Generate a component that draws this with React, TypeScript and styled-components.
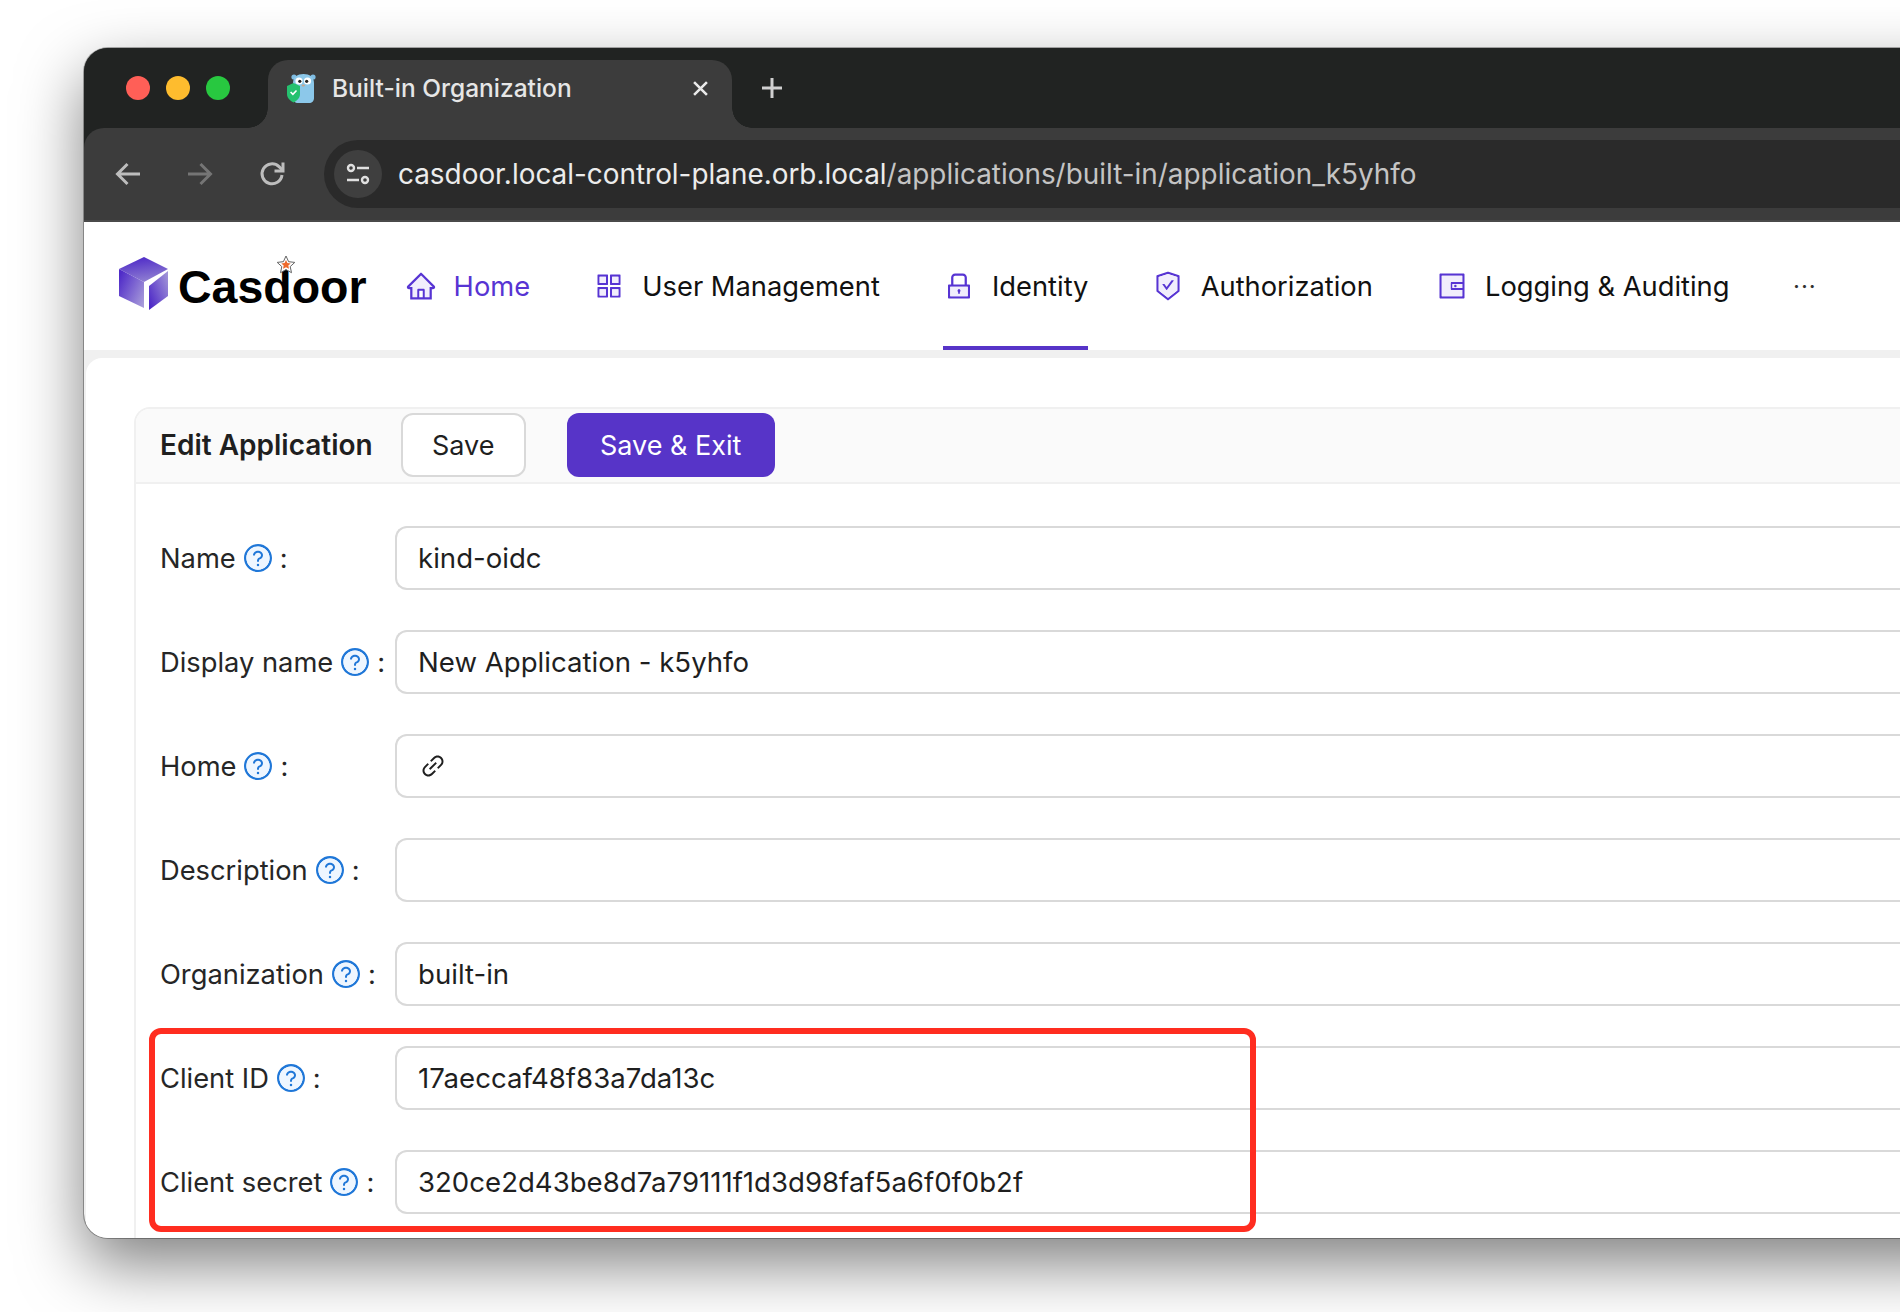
import { createGlobalStyle, styled } from 'styled-components';
import {
  AiOutlineLink,
  AiTwotoneAppstore,
  AiTwotoneHome,
  AiTwotoneLock,
  AiTwotoneQuestionCircle,
  AiTwotoneSafetyCertificate,
  AiTwotoneWallet,
} from 'react-icons/ai';

const NAV_ITEMS = [
  { label: 'Home', icon: AiTwotoneHome, accent: true },
  { label: 'User Management', icon: AiTwotoneAppstore },
  { label: 'Identity', icon: AiTwotoneLock, selected: true },
  { label: 'Authorization', icon: AiTwotoneSafetyCertificate },
  { label: 'Logging & Auditing', icon: AiTwotoneWallet },
];

const FIELDS = [
  { label: 'Name', value: 'kind-oidc' },
  { label: 'Display name', value: 'New Application - k5yhfo' },
  { label: 'Home', value: '', link: true },
  { label: 'Description', value: '' },
  { label: 'Organization', value: 'built-in' },
  { label: 'Client ID', value: '17aeccaf48f83a7da13c' },
  { label: 'Client secret', value: '320ce2d43be8d7a79111f1d3d98faf5a6f0f0b2f' },
];

const Gopher = () => (
  <svg width="29" height="31" viewBox="0 0 29 31">
    <circle cx="7" cy="4" r="2.600" fill="#7fbde3" />
    <circle cx="26" cy="4" r="2.600" fill="#7fbde3" />
    <path d="M6 10c0-6 4.500-9 10.500-9S27 4 27 10v15c0 3-2 5-5 5H11c-3 0-5-2-5-5z" fill="#8cc8ea" />
    <circle cx="12" cy="8" r="3.600" fill="#fff" />
    <circle cx="20.500" cy="8" r="3.600" fill="#fff" />
    <circle cx="12.800" cy="8.300" r="1.600" fill="#222" />
    <circle cx="19.700" cy="8.300" r="1.600" fill="#222" />
    <ellipse cx="16.300" cy="12.500" rx="1.700" ry="1.100" fill="#c9a58c" />
    <path d="M0 13l6.500-3 6.500 3v8c0 4-3 6.500-6.500 8.500C3 27.500 0 25 0 21z" fill="#25c16f" />
    <path d="M3.600 19l2.300 2.300 3.600-3.800" fill="none" stroke="#fff" strokeWidth="1.600" />
  </svg>
);

const CubeLogo = () => (
  <svg width="49" height="54" viewBox="0 0 49 54">
    <defs>
      <linearGradient id="cubeTop" x1="0.4" y1="0" x2="0.7" y2="1">
        <stop offset="0" stopColor="#4f2bc8" />
        <stop offset="1" stopColor="#9384d2" />
      </linearGradient>
      <linearGradient id="cubeLeft" x1="0" y1="0.2" x2="1" y2="0.9">
        <stop offset="0" stopColor="#4f2bc8" />
        <stop offset="1" stopColor="#a99dda" />
      </linearGradient>
      <linearGradient id="cubeRight" x1="1" y1="0.1" x2="0" y2="0.9">
        <stop offset="0" stopColor="#a295d8" />
        <stop offset="1" stopColor="#4a24c6" />
      </linearGradient>
    </defs>
    <path d="M25 0l24 12-24 13L0 12z" fill="url(#cubeTop)" />
    <path d="M0 12l25 13v26L0 39z" fill="url(#cubeLeft)" />
    <path d="M30 29L49 14v25L30 53z" fill="url(#cubeRight)" />
  </svg>
);

const Star = () => (
  <svg width="20" height="20" viewBox="0 0 20 20">
    <path
      d="M10 1l2.600 5.700 6.200.700-4.600 4.200 1.300 6.100L10 14.600 4.500 17.700l1.300-6.100L1.200 7.400l6.200-.700z"
      fill="#fff"
      stroke="#666"
      strokeWidth="1"
    />
    <path
      d="M10 5l1.400 3 3.300.400-2.400 2.200.700 3.200L10 12.200l-3 1.600.700-3.200-2.400-2.200 3.300-.400z"
      fill="#ee6a2c"
    />
  </svg>
);

const App = () => {
  return (
    <>
      <GlobalStyle />
      <Page>
        <Window>
          <TabStrip>
            <Lights>
              <Light $color="#ff5f57" />
              <Light $color="#febc2e" />
              <Light $color="#28c840" />
            </Lights>
            <Tab>
              <Gopher />
              <TabTitle>Built-in Organization</TabTitle>
              <svg width="15" height="15" viewBox="0 0 14 14">
                <path d="M1 1l12 12M13 1L1 13" stroke="#e8e8e8" strokeWidth="2.400" />
              </svg>
            </Tab>
            <NewTab>
              <svg width="22" height="22" viewBox="0 0 22 22">
                <path d="M11 1v20M1 11h20" stroke="#d0d0d0" strokeWidth="3" />
              </svg>
            </NewTab>
          </TabStrip>
          <Toolbar>
            <ToolIcon>
              <svg width="26" height="24" viewBox="0 0 26 24" fill="none" stroke="#bdbdbd" strokeWidth="3">
                <path d="M25 12H3M12.500 2L2.500 12l10 10" />
              </svg>
            </ToolIcon>
            <ToolIcon>
              <svg width="26" height="24" viewBox="0 0 26 24" fill="none" stroke="#757575" strokeWidth="3">
                <path d="M1 12h22M13.500 2l10 10-10 10" />
              </svg>
            </ToolIcon>
            <ToolIcon>
              <svg width="26" height="26" viewBox="0 0 26 26" fill="none" stroke="#bdbdbd" strokeWidth="3">
                <path d="M23 14a10 10 0 1 1-3-8.400L23.500 9" />
                <path d="M24 1.500V10H15.500" />
              </svg>
            </ToolIcon>
            <AddressBar>
              <SiteInfo>
                <svg width="24" height="24" viewBox="0 0 24 24" fill="none" stroke="#e0e0e0" strokeWidth="2.400">
                  <circle cx="5" cy="6" r="3" />
                  <path d="M11 6h12M1 18h12" />
                  <circle cx="19" cy="18" r="3" />
                </svg>
              </SiteInfo>
              <Url>
                casdoor.local-control-plane.orb.local
                <UrlPath>/applications/built-in/application_k5yhfo</UrlPath>
              </Url>
            </AddressBar>
          </Toolbar>
          <NavBar>
            <Logo>
              <CubeLogo />
              <LogoText>
                Casdoor
                <LogoStar>
                  <Star />
                </LogoStar>
              </LogoText>
            </Logo>
            {NAV_ITEMS.map(({ label, icon: Icon, accent, selected }) => (
              <NavItem key={label} $accent={accent} $selected={selected}>
                <NavIconSlot>
                  <Icon />
                </NavIconSlot>
                <span>{label}</span>
              </NavItem>
            ))}
            <MoreDots>···</MoreDots>
          </NavBar>
          <Content>
            <Sheet>
              <Card>
                <CardHeader>
                  <CardTitle>Edit Application</CardTitle>
                  <SaveButton>Save</SaveButton>
                  <PrimaryButton>Save &amp; Exit</PrimaryButton>
                </CardHeader>
                <CardBody>
                  {FIELDS.map((field) => (
                    <Row key={field.label}>
                      <FieldLabel>
                        <span>{field.label}</span>
                        <HelpIcon>
                          <AiTwotoneQuestionCircle />
                        </HelpIcon>
                        <span>:</span>
                      </FieldLabel>
                      <FieldInput>
                        {field.link && <AiOutlineLink />}
                        {field.value}
                      </FieldInput>
                    </Row>
                  ))}
                </CardBody>
              </Card>
            </Sheet>
          </Content>
          <Highlight />
        </Window>
      </Page>
    </>
  );
};

export default App;

const GlobalStyle = createGlobalStyle`
  html, body {
    margin: 0;
    height: 100%;
    overflow: hidden;
    background: #fff;
  }
  * {
    box-sizing: border-box;
  }
`;

const Page = styled.div`
  width: 1900px;
  height: 1312px;
  padding: 48px 0 0 84px;
  overflow: hidden;
  background: #fff;
  font-family: Inter, 'Liberation Sans', sans-serif;
`;

const Window = styled.div`
  position: relative;
  width: 1900px;
  height: 1190px;
  overflow: hidden;
  display: flex;
  flex-direction: column;
  border-radius: 24px;
  background: #212322;
  box-shadow: 0 0 0 1px rgba(0, 0, 0, 0.3), 0 26px 64px rgba(0, 0, 0, 0.5);
`;

const TabStrip = styled.div`
  height: 80px;
  flex: none;
  display: flex;
  align-items: flex-end;
  background: #212322;
`;

const Lights = styled.div`
  width: 184px;
  height: 80px;
  flex: none;
  display: flex;
  align-items: center;
  gap: 16px;
  padding-left: 42px;
`;

const Light = styled.span<{ $color: string }>`
  width: 24px;
  height: 24px;
  border-radius: 50%;
  background: ${(p) => p.$color};
`;

const Tab = styled.div`
  position: relative;
  width: 464px;
  height: 68px;
  flex: none;
  display: flex;
  align-items: center;
  padding: 0 24px 11px 19px;
  border-radius: 20px 20px 0 0;
  background: #3c3c3c;

  &::before,
  &::after {
    content: '';
    position: absolute;
    bottom: 0;
    width: 20px;
    height: 20px;
  }
  &::before {
    left: -20px;
    background: radial-gradient(circle at 0 0, #212322 19.5px, #3c3c3c 20px);
  }
  &::after {
    right: -20px;
    background: radial-gradient(circle at 100% 0, #212322 19.5px, #3c3c3c 20px);
  }
`;

const TabTitle = styled.span`
  flex: 1;
  margin: -2px 0 0 16px;
  font-size: 24.500px;
  font-weight: 500;
  color: #e6e6e6;
  white-space: nowrap;
`;

const NewTab = styled.div`
  height: 80px;
  display: flex;
  align-items: center;
  padding-left: 29px;
`;

const Toolbar = styled.div`
  height: 94px;
  flex: none;
  display: flex;
  align-items: center;
  gap: 46px;
  padding-left: 31px;
  border-top-left-radius: 20px;
  border-bottom: 2px solid #4a4a4a;
  background: #3c3c3c;
`;

const ToolIcon = styled.div`
  width: 26px;
  height: 26px;
  display: flex;
  align-items: center;
  justify-content: center;
`;

const AddressBar = styled.div`
  flex: 1;
  height: 68px;
  margin-left: -7px;
  display: flex;
  align-items: center;
  padding-left: 10px;
  border-radius: 34px 0 0 34px;
  background: #2a2a2a;
`;

const SiteInfo = styled.div`
  width: 48px;
  height: 48px;
  display: flex;
  align-items: center;
  justify-content: center;
  border-radius: 50%;
  background: #3f3f3f;
`;

const Url = styled.div`
  margin-left: 16px;
  font-size: 27.900px;
  color: #ececec;
  white-space: nowrap;
`;

const UrlPath = styled.span`
  color: #c4c4c4;
`;

const NavBar = styled.div`
  height: 128px;
  flex: none;
  display: flex;
  align-items: stretch;
  background: #fff;
`;

const Logo = styled.div`
  width: 289px;
  flex: none;
  display: flex;
  align-items: center;
  gap: 10px;
  padding: 0 0 5px 35px;
`;

const LogoText = styled.div`
  position: relative;
  margin-top: 7px;
  font-family: 'Liberation Sans', Arial, sans-serif;
  font-size: 46.500px;
  font-weight: 700;
  line-height: 1;
  color: #000;
`;

const LogoStar = styled.span`
  position: absolute;
  left: 98px;
  top: -9px;
  line-height: 0;
`;

const NavItem = styled.div<{ $accent?: boolean; $selected?: boolean }>`
  position: relative;
  flex: none;
  display: flex;
  align-items: center;
  margin: 0 31.600px;
  font-size: 27.300px;
  color: ${(p) => (p.$accent ? '#5734d3' : '#111')};

  ${(p) =>
    p.$selected &&
    `
    &::after {
      content: '';
      position: absolute;
      left: 0;
      right: 0;
      bottom: 0;
      height: 4px;
      background: #5734c8;
    }
  `}
`;

const NavIconSlot = styled.span`
  width: 49px;
  flex: none;
  display: flex;
  color: #5734d3;
  font-size: 32px;
  line-height: 0;

  path {
    fill: #5734d3;
  }
  path[fill='#D9D9D9'],
  path[fill='#E6E6E6'] {
    fill: #f1edfc;
  }
`;

const MoreDots = styled.div`
  display: flex;
  align-items: center;
  margin-left: 32px;
  font-size: 24px;
  font-weight: 400;
  letter-spacing: 1px;
  color: #333;
`;

const Content = styled.div`
  flex: 1;
  min-height: 0;
  padding: 8px 0 0 2px;
  background: #f0f0f0;
`;

const Sheet = styled.div`
  height: 100%;
  padding: 49px 0 0 48px;
  overflow: hidden;
  border-top-left-radius: 16px;
  background: #fff;
`;

const Card = styled.section`
  height: 100%;
  border: 2px solid #f0f0f0;
  border-bottom: none;
  border-right: none;
  border-top-left-radius: 16px;
`;

const CardHeader = styled.header`
  height: 75px;
  display: flex;
  align-items: center;
  padding: 0 0 1px 24px;
  border-bottom: 2px solid #f0f0f0;
  border-top-left-radius: 14px;
  background: #fafafa;
`;

const CardTitle = styled.h2`
  margin: 0 28px 0 0;
  font-size: 28px;
  font-weight: 600;
  color: #1f1f1f;
`;

const SaveButton = styled.button`
  width: 125px;
  height: 64px;
  margin-right: 41px;
  border: 2px solid #d9d9d9;
  border-radius: 12px;
  background: #fff;
  font: inherit;
  font-size: 27px;
  color: #1f1f1f;
`;

const PrimaryButton = styled.button`
  width: 208px;
  height: 64px;
  border: none;
  border-radius: 12px;
  background: #5734c8;
  font: inherit;
  font-size: 27px;
  color: #fff;
`;

const CardBody = styled.div`
  display: flex;
  flex-direction: column;
  gap: 40px;
  padding: 42px 0 0 24px;
`;

const Row = styled.div`
  display: grid;
  grid-template-columns: 235px 1fr;
  align-items: center;
`;

const FieldLabel = styled.label`
  display: flex;
  align-items: center;
  font-size: 27.300px;
  color: #262626;
`;

const HelpIcon = styled.span`
  display: flex;
  margin: 0 6px;
  font-size: 32px;
  line-height: 0;

  path {
    fill: #1f77d8;
  }
  path[fill='#D9D9D9'],
  path[fill='#E6E6E6'] {
    fill: #eef6ff;
  }
`;

const FieldInput = styled.div`
  height: 64px;
  display: flex;
  align-items: center;
  padding-left: 21px;
  border: 2px solid #d9d9d9;
  border-right: none;
  border-radius: 12px 0 0 12px;
  font-size: 27.600px;
  color: #1f1f1f;

  svg {
    margin-left: 1px;
    font-size: 28px;
  }
`;

const Highlight = styled.div`
  position: absolute;
  left: 65px;
  top: 980px;
  width: 1107px;
  height: 204px;
  border: 6px solid #ff2d20;
  border-radius: 12px;
  pointer-events: none;
`;
